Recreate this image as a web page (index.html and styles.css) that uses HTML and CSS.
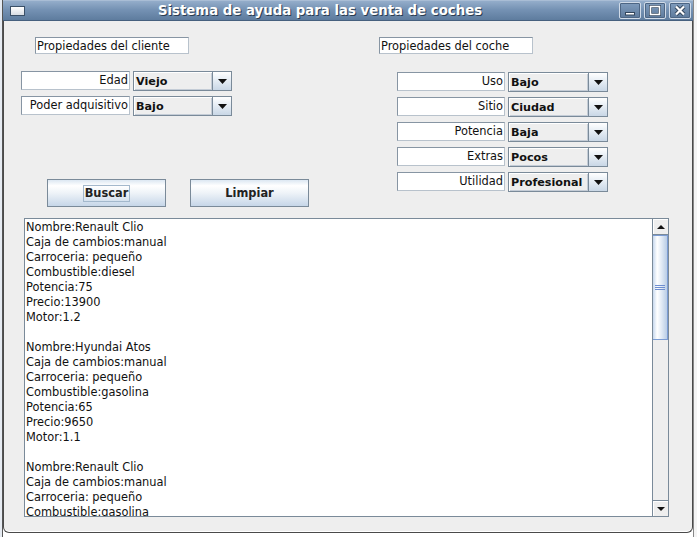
FILE: index.html
```html
<!DOCTYPE html>
<html>
<head>
<meta charset="utf-8">
<link rel="stylesheet" href="styles.css">
</head>
<body>
<div class="desktop">
  <div class="edge-left"></div>
  <div class="window">
    <div class="titlebar">
      <div class="tb-icon"></div>
      <div class="tb-title">Sistema de ayuda para las venta de coches</div>
      <div class="tb-buttons">
        <div class="tb-btn"><svg width="12" height="10" viewBox="0 0 12 10"><rect x="1.5" y="6.5" width="9" height="2.5" fill="#fff" stroke="#33465c" stroke-width="1"/></svg></div>
        <div class="tb-btn"><svg width="12" height="11" viewBox="0 0 12 11"><rect x="1.5" y="1.5" width="9" height="8" fill="none" stroke="#33465c" stroke-width="3"/><rect x="1.5" y="1.5" width="9" height="8" fill="none" stroke="#fff" stroke-width="1.6"/></svg></div>
        <div class="tb-btn"><svg width="12" height="11" viewBox="0 0 12 11"><path d="M2 1.5 L10 9.5 M10 1.5 L2 9.5" stroke="#33465c" stroke-width="4"/><path d="M2 1.5 L10 9.5 M10 1.5 L2 9.5" stroke="#fff" stroke-width="2.2"/></svg></div>
      </div>
    </div>
    <div class="content">
      <div class="top">
        <div class="col-left">
          <div class="header-field">Propiedades del cliente</div>
          <div class="rows">
            <div class="row">
              <div class="label-field">Edad</div>
              <div class="combo"><span class="combo-text">Viejo</span><span class="combo-arrow"><svg width="9" height="5" viewBox="0 0 9 5"><polygon points="0,0 9,0 4.5,5" fill="#111"/></svg></span></div>
            </div>
            <div class="row">
              <div class="label-field">Poder adquisitivo</div>
              <div class="combo"><span class="combo-text">Bajo</span><span class="combo-arrow"><svg width="9" height="5" viewBox="0 0 9 5"><polygon points="0,0 9,0 4.5,5" fill="#111"/></svg></span></div>
            </div>
          </div>
          <div class="buttons">
            <div class="btn"><span class="focus">Buscar</span></div>
            <div class="btn">Limpiar</div>
          </div>
        </div>
        <div class="col-right">
          <div class="header-field">Propiedades del coche</div>
          <div class="rows rows-right">
            <div class="row">
              <div class="label-field">Uso</div>
              <div class="combo"><span class="combo-text">Bajo</span><span class="combo-arrow"><svg width="9" height="5" viewBox="0 0 9 5"><polygon points="0,0 9,0 4.5,5" fill="#111"/></svg></span></div>
            </div>
            <div class="row">
              <div class="label-field">Sitio</div>
              <div class="combo"><span class="combo-text">Ciudad</span><span class="combo-arrow"><svg width="9" height="5" viewBox="0 0 9 5"><polygon points="0,0 9,0 4.5,5" fill="#111"/></svg></span></div>
            </div>
            <div class="row">
              <div class="label-field">Potencia</div>
              <div class="combo"><span class="combo-text">Baja</span><span class="combo-arrow"><svg width="9" height="5" viewBox="0 0 9 5"><polygon points="0,0 9,0 4.5,5" fill="#111"/></svg></span></div>
            </div>
            <div class="row">
              <div class="label-field">Extras</div>
              <div class="combo"><span class="combo-text">Pocos</span><span class="combo-arrow"><svg width="9" height="5" viewBox="0 0 9 5"><polygon points="0,0 9,0 4.5,5" fill="#111"/></svg></span></div>
            </div>
            <div class="row">
              <div class="label-field">Utilidad</div>
              <div class="combo"><span class="combo-text">Profesional</span><span class="combo-arrow"><svg width="9" height="5" viewBox="0 0 9 5"><polygon points="0,0 9,0 4.5,5" fill="#111"/></svg></span></div>
            </div>
          </div>
        </div>
      </div>
      <div class="textarea">
        <div class="text">
          <div>Nombre:Renault Clio</div>
          <div>Caja de cambios:manual</div>
          <div>Carroceria: pequeño</div>
          <div>Combustible:diesel</div>
          <div>Potencia:75</div>
          <div>Precio:13900</div>
          <div>Motor:1.2</div>
          <div>&nbsp;</div>
          <div>Nombre:Hyundai Atos</div>
          <div>Caja de cambios:manual</div>
          <div>Carroceria: pequeño</div>
          <div>Combustible:gasolina</div>
          <div>Potencia:65</div>
          <div>Precio:9650</div>
          <div>Motor:1.1</div>
          <div>&nbsp;</div>
          <div>Nombre:Renault Clio</div>
          <div>Caja de cambios:manual</div>
          <div>Carroceria: pequeño</div>
          <div>Combustible:gasolina</div>
        </div>
        <div class="scrollbar">
          <div class="sb-btn"><svg width="8" height="4" viewBox="0 0 8 4"><polygon points="0,4 8,4 4,0" fill="#111"/></svg></div>
          <div class="sb-thumb"><div class="grip"></div><div class="grip"></div><div class="grip"></div></div>
          <div class="sb-track"></div>
          <div class="sb-btn sb-down"><svg width="8" height="4" viewBox="0 0 8 4"><polygon points="0,0 8,0 4,4" fill="#111"/></svg></div>
        </div>
      </div>
    </div>
  </div>
  <div class="edge-right"></div>
</div>
</body>
</html>
```
FILE: styles.css
```css
html, body {
  margin: 0;
  padding: 0;
  background: #ffffff;
}
.desktop {
  display: flex;
  width: 697px;
  height: 537px;
  overflow: hidden;
}
.edge-left {
  width: 2px;
  height: 537px;
  background: #e6ebf2;
  border-right: 1px solid #555;
}
.edge-right {
  width: 3px;
  height: 537px;
  background: #f4f4f4;
  border-left: 1px solid #888;
}
.window {
  width: 690px;
  height: 533px;
  display: flex;
  flex-direction: column;
}
.titlebar {
  height: 21px;
  box-sizing: border-box;
  display: flex;
  align-items: center;
  background: linear-gradient(#94adca 0%, #7592b4 45%, #5e7c9e 100%);
  border-top: 1px solid #a9bdd5;
  border-bottom: 1px solid #46607e;
}
.tb-icon {
  width: 13px;
  height: 8px;
  margin-left: 7px;
  border: 1px solid #3b5068;
  background: linear-gradient(#ffffff, #d8dde4);
}
.tb-title {
  flex: 1;
  text-align: center;
  color: #ffffff;
  font-family: "DejaVu Sans", sans-serif;
  font-weight: bold;
  font-size: 13.3px;
  text-shadow: 1px 1px 0 #2b3c50;
  padding-right: 4px;
}
.tb-buttons {
  display: flex;
  gap: 3px;
  margin-right: 2px;
}
.tb-btn {
  width: 20px;
  height: 15px;
  border: 1px solid #d0dbe8;
  border-radius: 2px;
  background: linear-gradient(#7f9cbd, #5d7a9c);
  box-shadow: inset 0 0 0 1px #4d6684;
  display: flex;
  align-items: center;
  justify-content: center;
}
.content {
  flex: 1;
  background: #eeeeee;
  border-left: 1px solid #4a4a4a;
  border-right: 1px solid #4a4a4a;
  border-bottom: 1px solid #4a4a4a;
  border-radius: 0 0 6px 6px;
  box-shadow: inset 0 -1px 0 #ffffff;
  font-family: "DejaVu Sans", sans-serif;
  font-size: 11.4px;
  color: #111;
}
.top {
  display: flex;
}
.col-left {
  width: 375px;
  box-sizing: border-box;
  padding-left: 17px;
}
.header-field {
  margin-top: 16px;
  width: 154px;
  height: 17px;
  box-sizing: border-box;
  background: #ffffff;
  border: 1px solid #8795a3;
  border-right-color: #b8c2cc;
  border-bottom-color: #b8c2cc;
  padding-left: 1px;
  padding-top: 1px;
  line-height: 14px;
  white-space: nowrap;
}
.col-left .header-field {
  margin-left: 14px;
}
.rows {
  margin-top: 17px;
  display: flex;
  flex-direction: column;
  gap: 5px;
}
.rows-right {
  margin-top: 18px;
  margin-left: 18px;
}
.row {
  display: flex;
  gap: 3px;
  height: 20px;
}
.label-field {
  width: 109px;
  height: 19px;
  box-sizing: border-box;
  background: #ffffff;
  border: 1px solid #8795a3;
  border-right-color: #b8c2cc;
  border-bottom-color: #b8c2cc;
  text-align: right;
  padding-right: 1px;
  line-height: 17px;
  white-space: nowrap;
}
.rows-right .label-field {
  width: 108px;
}
.combo {
  width: 99px;
  height: 20px;
  box-sizing: border-box;
  border: 1px solid #7a8a99;
  display: flex;
  background: #eeeeee;
}
.rows-right .combo {
  width: 100px;
}
.combo-text {
  flex: 1;
  font-weight: bold;
  font-size: 11.2px;
  line-height: 19px;
  padding-left: 2px;
  box-shadow: inset 1px 1px 0 #ffffff, inset -1px -1px 0 #c4ccd6;
  white-space: nowrap;
}
.combo-arrow {
  width: 18px;
  border-left: 1px solid #7a8a99;
  background: linear-gradient(#ffffff 0%, #eef3f8 30%, #c9d7e6 100%);
  display: flex;
  align-items: center;
  justify-content: center;
}
.buttons {
  display: flex;
  gap: 24px;
  margin-top: 63px;
  margin-left: 26px;
}
.btn {
  width: 119px;
  height: 28px;
  box-sizing: border-box;
  border: 1px solid #7a8a99;
  background: linear-gradient(#dce7f2 0%, #ffffff 22%, #eef3f8 50%, #c6d6e8 100%);
  display: flex;
  align-items: center;
  justify-content: center;
  font-weight: bold;
  font-size: 11.4px;
  color: #222;
}
.focus {
  border: 1px solid #a3b8cc;
  padding: 1px 1px 1px 1px;
  line-height: 13px;
}
.textarea {
  margin-top: 11px;
  margin-left: 20px;
  width: 645px;
  height: 299px;
  box-sizing: border-box;
  border: 1px solid #7a8a99;
  background: #ffffff;
  display: flex;
}
.text {
  flex: 1;
  padding-left: 1px;
  padding-top: 1px;
  line-height: 15px;
  overflow: hidden;
  white-space: nowrap;
}
.scrollbar {
  width: 16px;
  box-sizing: border-box;
  border-left: 1px solid #7a8a99;
  background: #eeeeee;
  display: flex;
  flex-direction: column;
}
.sb-btn {
  height: 15px;
  border-bottom: 1px solid #7a8a99;
  background: #eeeeee;
  box-shadow: inset 1px 1px 0 #ffffff;
  display: flex;
  align-items: center;
  justify-content: center;
}
.sb-down {
  border-bottom: none;
  border-top: 1px solid #7a8a99;
}
.sb-thumb {
  height: 105px;
  box-sizing: border-box;
  border: 1px solid #7b9cd4;
  border-left: none;
  background: linear-gradient(90deg, #c7d8ee 0%, #ffffff 30%, #e2ebf6 60%, #b9cde6 100%);
  display: flex;
  flex-direction: column;
  align-items: center;
  justify-content: center;
  gap: 1px;
}
.grip {
  width: 10px;
  height: 1px;
  background: #6e8ed0;
}
.sb-track {
  flex: 1;
}
```
